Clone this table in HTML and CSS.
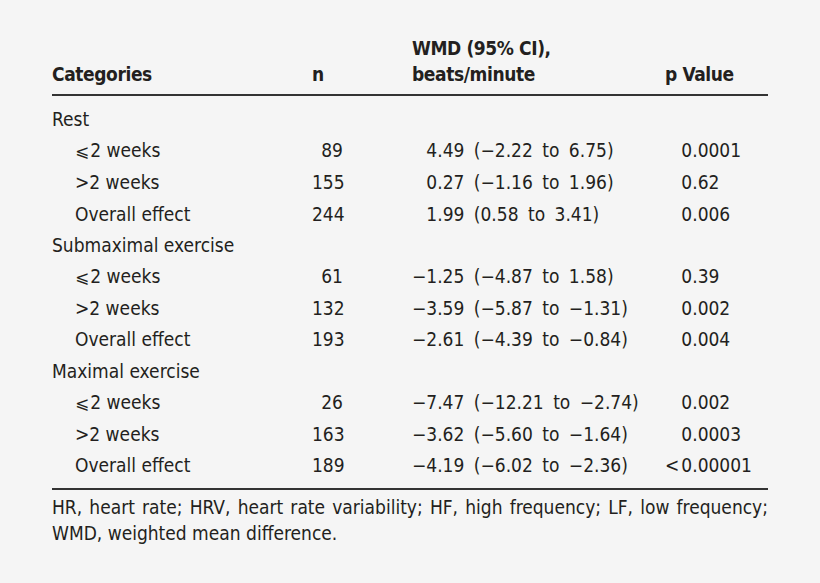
FILE: index.html
```html
<!DOCTYPE html>
<html lang="en">
<head>
<meta charset="utf-8">
<title>WMD table</title>
<link rel="stylesheet" href="styles.css">
</head>
<body>
<div class="wrap">
  <div class="grid head">
    <div class="c1 hb">Categories</div>
    <div class="c2 hb hn">n</div>
    <div class="c3 hb">WMD (95% CI),<br>beats/minute</div>
    <div class="c4 hb">p Value</div>
  </div>
  <div class="grid body">
    <div class="c1 grp">Rest</div><div class="c2"></div><div class="c3"></div><div class="c4"></div>

    <div class="c1 sub"><span class="le">⩽</span>2 weeks</div><div class="c2">89</div><div class="c3"><span class="ph">−</span>4.49 (−2.22 to 6.75)</div><div class="c4"><span class="lt ph">&lt;</span>0.0001</div>
    <div class="c1 sub">&gt;2 weeks</div><div class="c2">155</div><div class="c3"><span class="ph">−</span>0.27 (−1.16 to 1.96)</div><div class="c4"><span class="lt ph">&lt;</span>0.62</div>
    <div class="c1 sub">Overall effect</div><div class="c2">244</div><div class="c3"><span class="ph">−</span>1.99 (0.58 to 3.41)</div><div class="c4"><span class="lt ph">&lt;</span>0.006</div>

    <div class="c1 grp">Submaximal exercise</div><div class="c2"></div><div class="c3"></div><div class="c4"></div>
    <div class="c1 sub"><span class="le">⩽</span>2 weeks</div><div class="c2">61</div><div class="c3">−1.25 (−4.87 to 1.58)</div><div class="c4"><span class="lt ph">&lt;</span>0.39</div>
    <div class="c1 sub">&gt;2 weeks</div><div class="c2">132</div><div class="c3">−3.59 (−5.87 to −1.31)</div><div class="c4"><span class="lt ph">&lt;</span>0.002</div>
    <div class="c1 sub">Overall effect</div><div class="c2">193</div><div class="c3">−2.61 (−4.39 to −0.84)</div><div class="c4"><span class="lt ph">&lt;</span>0.004</div>

    <div class="c1 grp">Maximal exercise</div><div class="c2"></div><div class="c3"></div><div class="c4"></div>
    <div class="c1 sub"><span class="le">⩽</span>2 weeks</div><div class="c2">26</div><div class="c3">−7.47 (−12.21 to −2.74)</div><div class="c4"><span class="lt ph">&lt;</span>0.002</div>
    <div class="c1 sub">&gt;2 weeks</div><div class="c2">163</div><div class="c3">−3.62 (−5.60 to −1.64)</div><div class="c4"><span class="lt ph">&lt;</span>0.0003</div>
    <div class="c1 sub">Overall effect</div><div class="c2">189</div><div class="c3">−4.19 (−6.02 to −2.36)</div><div class="c4"><span class="lt">&lt;</span>0.00001</div>
  </div>
  <p class="note">HR, heart rate; HRV, heart rate variability; HF, high frequency; LF, low frequency; WMD, weighted mean difference.</p>
</div>
</body>
</html>
```

FILE: styles.css
```css
html, body {
  margin: 0;
  padding: 0;
  background: #f5f5f5;
}

body {
  color: #231f20;
  font-family: "DejaVu Sans Condensed", "Liberation Sans", sans-serif;
  font-size: 19px;
  letter-spacing: 0;
}

.wrap {
  width: 716px;
  margin-left: 52px;
  padding-top: 35px;
}

.grid {
  display: grid;
  grid-template-columns: 260px 31px 322px 103px;
}

.head {
  line-height: 26px;
  padding-bottom: 7px;
  border-bottom: 2px solid #333;
  align-items: end;
}

.hb {
  font-weight: bold;
  letter-spacing: -0.4px;
}

.head .c2 {
  text-align: left;
}

.body {
  line-height: 31.2px;
  padding-top: 8px;
  padding-bottom: 7px;
  border-bottom: 2px solid #333;
}

.c2 {
  text-align: right;
  white-space: nowrap;
}

.c3 {
  padding-left: 69px;
  white-space: nowrap;
}

.body .c3 {
  word-spacing: 4px;
}

.c4 {
  white-space: nowrap;
}

.lt {
  margin-right: 2px;
}

.sub {
  padding-left: 23px;
}

.ph {
  visibility: hidden;
}

.le {
  font-family: "DejaVu Sans", sans-serif;
  font-size: 17px;
  margin-right: 1px;
}

.note {
  margin: 0;
  padding-top: 4px;
  line-height: 26px;
  text-align: justify;
}
```
